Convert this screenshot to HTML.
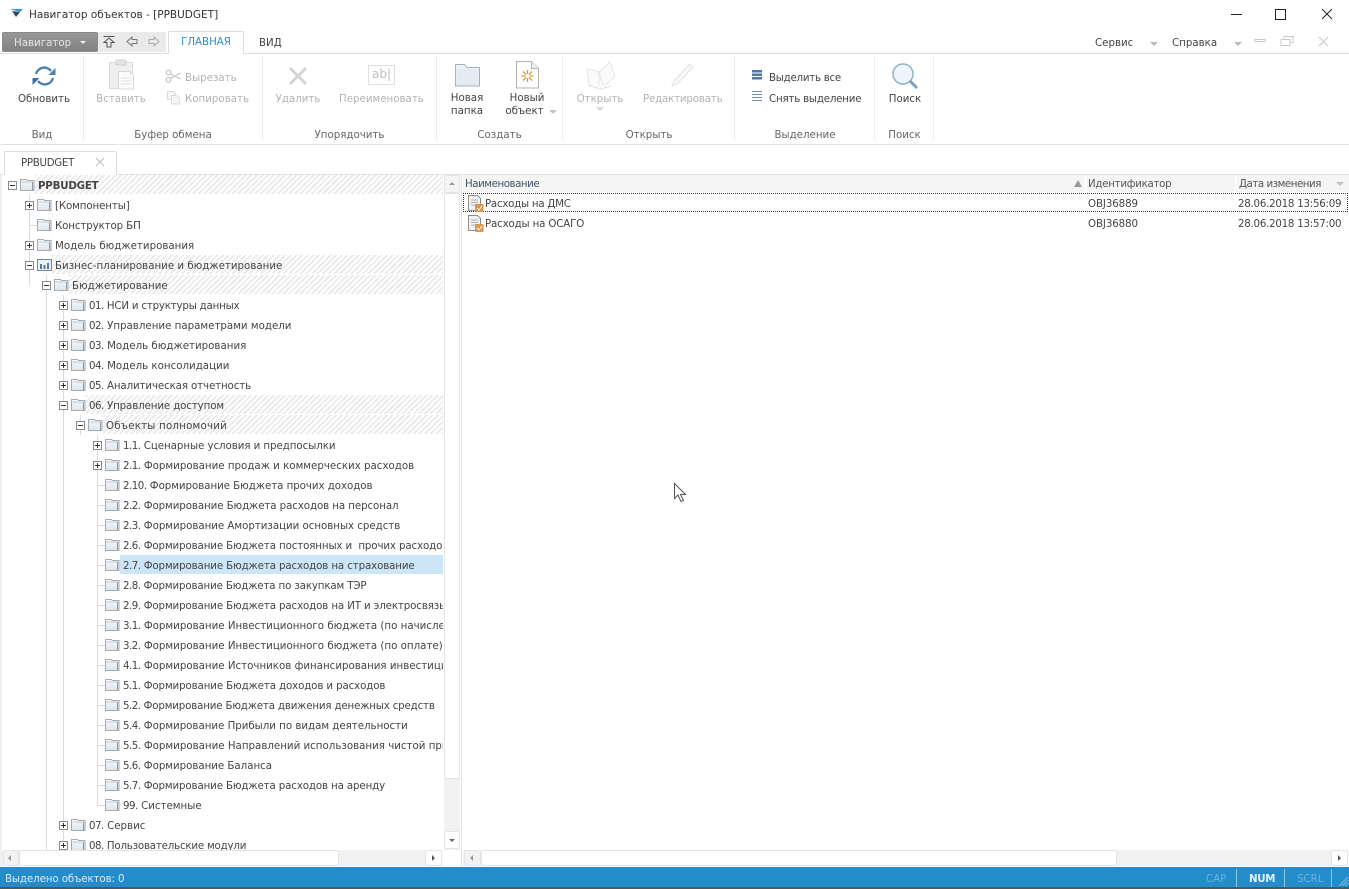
<!DOCTYPE html>
<html lang="ru"><head><meta charset="utf-8"><title>Навигатор объектов</title>
<style>
html,body{margin:0;padding:0;background:#fff}
body{width:1349px;height:889px;position:relative;overflow:hidden;font:10.25px/16px "DejaVu Sans",sans-serif;color:#444}
i{font-style:normal;letter-spacing:-.5px}
.a{position:absolute;white-space:nowrap}
.c{position:absolute;white-space:nowrap;text-align:center}
.g{color:#b3b3b3}
.sep{position:absolute;top:56px;height:84px;width:1px;background:#ececec}
.gl{position:absolute;top:127px;color:#666;text-align:center;white-space:nowrap;height:14px}
.r{position:absolute;left:0;width:443px;height:20px;line-height:20px;white-space:nowrap;color:#444}
.h{position:absolute;right:0;top:0;bottom:1px;background:repeating-linear-gradient(135deg,#ebebeb 0 2px,#fff 2px 4px)}
.s{position:absolute;top:0;right:0;bottom:1px;background:#cde6f7}
.t{position:absolute;top:1px}
.n1{letter-spacing:-.12px}
.n2{letter-spacing:-.2px}
.f{position:absolute;top:3px;width:15px;height:14px}
.e{position:absolute;top:6px;width:7px;height:7px;border:1px solid #8a8a8a;background:#fff;box-sizing:content-box}
.e:before{content:"";position:absolute;left:1px;top:3px;width:5px;height:1px;background:#333}
.p:after{content:"";position:absolute;left:3px;top:1px;width:1px;height:5px;background:#333}
.v{position:absolute;width:1px;background:#dcdcdc}
.l{position:absolute;height:1px;background:#dcdcdc;top:10px}
.btn{position:absolute;background:#fff;border:1px solid #e4e4e4;border-radius:3px;box-sizing:border-box}
.tr{position:absolute;width:0;height:0}
</style></head><body>
<svg width="0" height="0" style="position:absolute"><defs>
<linearGradient id="fg" x1="0" y1="0" x2="0" y2="1"><stop offset="0" stop-color="#f6f8fa"/><stop offset="1" stop-color="#dfe5eb"/></linearGradient>
<g id="fo"><path d="M.5 1.500h6l1 1h6.500v10h-13.500z" fill="url(#fg)" stroke="#a3abb3"/><path d="M1.500 4h11" stroke="#c3cad1"/><path d="M12.500 4v8" stroke="#8f98a1"/></g>
</defs></svg>

<!-- title bar -->
<svg class="a" style="left:9px;top:8px" width="16" height="12"><path d="M1 1l13 0-3 3z" fill="#2f95d6"/><path d="M3 3l8 1-4 5z" fill="#33475c"/></svg>
<div class="a" style="left:29px;top:7px;font-size:10.5px;color:#333">Навигатор объектов - [PPBUDGET]</div>
<svg class="a" style="left:1225px;top:6px" width="120" height="16" fill="none" stroke="#222" stroke-width="1"><path d="M6 8.500h11"/><rect x="50.500" y="3.500" width="10" height="10"/><path d="M97 3l10 10M107 3l-10 10"/></svg>

<!-- top strip -->
<div class="a" style="left:2px;top:32px;width:96px;height:20px;background:linear-gradient(#9a9a9a,#7f7f7f);border-radius:2px;box-shadow:inset 0 0 0 1px #8a8a8a"></div>
<div class="a" style="left:14px;top:35px;color:#e4e4e4">Навигатор</div>
<div class="tr" style="left:80px;top:41px;border:3px solid transparent;border-top:3px solid #eee"></div>
<div class="a" style="left:98px;top:32px;width:68px;height:20px;background:#eaeaea"></div>
<svg class="a" style="left:102px;top:34px" width="62" height="15" fill="none"><path d="M1.500 2.500h11M7 4l5 4.500h-3v4.500h-4v-4.500h-3z" stroke="#555"/><path d="M25 7.500l5-4.500v2.500h5v4h-5v2.500z" stroke="#777"/><path d="M57 7.500l-5-4.500v2.500h-5v4h5v2.500z" stroke="#aaa"/></svg>
<div class="a" style="left:0;top:53px;width:1349px;height:1px;background:#dcdcdc"></div>
<div class="a" style="left:168px;top:31px;width:76px;height:23px;background:#fff;border:1px solid #dcdcdc;border-bottom:0;box-sizing:border-box;border-radius:2px 2px 0 0;text-align:center;line-height:21px;color:#2e8ccb">ГЛАВНАЯ</div>
<div class="a" style="left:259px;top:35px;color:#444">ВИД</div>
<div class="a" style="left:1095px;top:35px">Сервис</div>
<div class="tr" style="left:1150px;top:42px;border:4px solid transparent;border-top:4px solid #b8b8b8"></div>
<div class="a" style="left:1172px;top:35px">Справка</div>
<div class="tr" style="left:1234px;top:42px;border:4px solid transparent;border-top:4px solid #b8b8b8"></div>
<svg class="a" style="left:1254px;top:34px" width="82" height="14" fill="none" stroke="#c8c8c8"><path d="M1 5.500h10v2h-10z"/><path d="M27 5.500h9v6h-9zM30 5v-2.500h9v6h-3"/><path d="M65 3l9 9M74 3l-9 9"/></svg>

<!-- ribbon -->
<svg class="a" style="left:32px;top:64px" width="25" height="24" fill="none" stroke-width="2.400"><path d="M4 10a8.500 8.500 0 0 1 15-3" stroke="#4a7fb2"/><path d="M21 14a8.500 8.500 0 0 1-15 3" stroke="#4a7fb2"/><path d="M22.500 3v7h-7z" fill="#4a7fb2" stroke="none" transform="translate(1 1)"/><path d="M1.500 21v-7h7z" fill="#3f6f9f" stroke="none" transform="translate(-1 0)"/></svg>
<div class="c" style="left:10px;top:91px;width:68px;color:#444">Обновить</div>
<div class="gl" style="left:0;width:84px">Вид</div>
<div class="sep" style="left:83px"></div>

<svg class="a" style="left:108px;top:59px" width="28" height="32" fill="none"><rect x="1.500" y="3.500" width="23" height="26" fill="#efefef" stroke="#dcdcdc"/><rect x="8" y="1" width="10" height="5" fill="#e3e3e3" stroke="#d0d0d0"/><path d="M10.500 12.500h11l4 4v13.500h-15z" fill="#fbfbfb" stroke="#d8d8d8"/><path d="M13 19h10M13 22h10M13 25h10" stroke="#e0e0e0"/></svg>
<div class="c g" style="left:88px;top:91px;width:66px">Вставить</div>
<svg class="a" style="left:165px;top:69px" width="17" height="15" fill="none" stroke="#cfcfcf" stroke-width="1.500"><circle cx="3.500" cy="3.500" r="2.300"/><circle cx="3.500" cy="11" r="2.300"/><path d="M5.500 5l10 5M5.500 9.500l10-5.500"/></svg>
<div class="a g" style="left:185px;top:70px">Вырезать</div>
<svg class="a" style="left:166px;top:90px" width="15" height="15" fill="#f5f5f5" stroke="#dcdcdc"><path d="M1.500 1.500h6l2 2v6h-8z"/><path d="M5.500 5.500h5l3 3v5.500h-8z"/></svg>
<div class="a g" style="left:185px;top:91px">Копировать</div>
<div class="gl" style="left:84px;width:178px">Буфер обмена</div>
<div class="sep" style="left:262px"></div>

<svg class="a" style="left:288px;top:66px" width="20" height="20" fill="none" stroke="#d4d4d4" stroke-width="3"><path d="M2 2l16 16M18 2l-16 16"/></svg>
<div class="c g" style="left:263px;top:91px;width:70px">Удалить</div>
<div class="a" style="left:368px;top:65px;width:27px;height:20px;border:1px solid #e0e0e0;box-sizing:border-box;color:#bdbdbd;font-size:12px;line-height:17px;text-align:center">ab|</div>
<div class="a g" style="left:339px;top:91px">Переименовать</div>
<div class="gl" style="left:263px;width:173px">Упорядочить</div>
<div class="sep" style="left:436px"></div>

<svg class="a" style="left:455px;top:63px" width="25" height="24"><path d="M.5 1.500h9l2.500 3h12.500v18.500h-24z" fill="#eef1f4" stroke="#a6b0ba"/><path d="M1.500 6h22v16h-22z" fill="#e6ebf1"/></svg>
<div class="c" style="left:440px;top:92px;width:54px;line-height:13px;color:#444">Новая<br>папка</div>
<svg class="a" style="left:516px;top:61px" width="24" height="28" fill="none"><path d="M.5.500h15l7 7v19.500h-22z" fill="#fdfdfd" stroke="#b4b4b4"/><path d="M15.500.500v7h7" fill="#eee" stroke="#b4b4b4"/><g stroke="#e8952f" stroke-width="1.300"><path d="M11.500 9v4M11.500 17v4M5.500 15h4M13.500 15h4M7 10.500l3 3M16 10.500l-3 3M7 19.500l3-3M16 19.500l-3-3"/></g></svg>
<div class="c" style="left:497px;top:92px;width:60px;line-height:13px;color:#444">Новый<br><span style="margin-left:-5px">объект</span></div>
<div class="tr" style="left:549px;top:110px;border:4px solid transparent;border-top:4px solid #c4c4c4"></div>
<div class="gl" style="left:437px;width:125px">Создать</div>
<div class="sep" style="left:562px"></div>

<svg class="a" style="left:586px;top:61px" width="30" height="29" fill="#fafafa" stroke="#e4e4e4"><path d="M1 8l12 3v16l-10-3z"/><path d="M13 11l11-10 5 15-12 10z"/><path d="M3 25l12 3 11-3"/></svg>
<div class="c g" style="left:568px;top:91px;width:64px">Открыть</div>
<div class="tr" style="left:596px;top:107px;border:4px solid transparent;border-top:4px solid #d6d6d6"></div>
<svg class="a" style="left:670px;top:62px" width="26" height="26" fill="#f8f8f8" stroke="#e2e2e2"><path d="M20 2l3 3-16 17-5 2 2-5z"/></svg>
<div class="a g" style="left:643px;top:91px;letter-spacing:-.18px">Редактировать</div>
<div class="gl" style="left:563px;width:172px">Открыть</div>
<div class="sep" style="left:734px"></div>

<svg class="a" style="left:752px;top:70px" width="12" height="36" fill="none"><g fill="#4d78a8"><rect x="0" y="0" width="10" height="2.500"/><rect x="0" y="3.500" width="10" height="2.500"/><rect x="0" y="7" width="10" height="2.500"/></g><g stroke="#6b8db3"><path d="M0 21.500h10M0 24.500h10M0 27.500h10M0 30.500h10" stroke-width="1"/></g></svg>
<div class="a" style="left:769px;top:70px;color:#444;letter-spacing:-.25px">Выделить все</div>
<div class="a" style="left:769px;top:91px;color:#444;letter-spacing:-.2px">Снять выделение</div>
<div class="gl" style="left:735px;width:140px">Выделение</div>
<div class="sep" style="left:874px"></div>

<svg class="a" style="left:892px;top:63px" width="28" height="27" fill="none"><circle cx="11" cy="11" r="10" fill="#eef5fb" stroke="#8fb3cf" stroke-width="1.500"/><path d="M18 18l7 7" stroke="#7f9fba" stroke-width="3"/></svg>
<div class="c" style="left:875px;top:91px;width:60px;color:#444">Поиск</div>
<div class="gl" style="left:875px;width:59px">Поиск</div>
<div class="sep" style="left:933px"></div>
<div class="a" style="left:0;top:144px;width:1349px;height:1px;background:#e2e2e2"></div>

<!-- doc tab -->
<div class="a" style="left:4px;top:151px;width:113px;height:24px;border:1px solid #dedede;border-bottom:0;box-sizing:border-box;background:#fff;border-radius:2px 2px 0 0"></div>
<div class="a" style="left:21px;top:155px;color:#444;letter-spacing:-.3px">PPBUDGET</div>
<svg class="a" style="left:95px;top:157px" width="10" height="10" stroke="#bbb" fill="none"><path d="M1 1l8 8M9 1l-8 8"/></svg>
<div class="a" style="left:0;top:174px;width:1349px;height:1px;background:#e2e2e2"></div>
<div class="a" style="left:5px;top:174px;width:111px;height:1px;background:#fff"></div>
<div class="a" style="left:0;top:175px;width:2px;height:692px;background:#efefef"></div>

<!-- tree -->
<div class="a" style="left:2px;top:175px;width:441px;height:675px;overflow:hidden">
<div style="position:absolute;left:-2px;top:0;width:443px;height:675px">
<div class="v" style="left:29px;top:20px;height:90px"></div>
<div class="v" style="left:46px;top:100px;height:575px"></div>
<div class="v" style="left:63px;top:120px;height:555px"></div>
<div class="v" style="left:80px;top:240px;height:20px"></div>
<div class="v" style="left:97px;top:260px;height:371px"></div>

<div class="r" style="top:0"><div class="h" style="left:35px"></div><div class="e" style="left:8px"></div><svg class="f" style="left:20px"><use href="#fo"/></svg><div class="t" style="left:38px;font-weight:bold;color:#444;letter-spacing:-.2px">PPBUDGET</div></div>
<div class="r" style="top:20px"><div class="e p" style="left:25px"></div><svg class="f" style="left:37px"><use href="#fo"/></svg><div class="t n1" style="left:55px">[Компоненты]</div></div>
<div class="r" style="top:40px"><div class="l" style="left:29px;width:8px"></div><svg class="f" style="left:37px"><use href="#fo"/></svg><div class="t n1" style="left:55px">Конструктор БП</div></div>
<div class="r" style="top:60px"><div class="e p" style="left:25px"></div><svg class="f" style="left:37px"><use href="#fo"/></svg><div class="t" style="left:55px">Модель бюджетирования</div></div>
<div class="r" style="top:80px"><div class="h" style="left:52px"></div><div class="e" style="left:25px"></div><svg class="f" style="left:37px" viewBox="0 0 15 14"><rect x=".5" y="1.500" width="14" height="11" fill="#eef2f7" stroke="#6f86a3"/><path d="M3 6h2v5h-2zM6.500 7h2v4h-2zM10 5h2v6h-2z" fill="#4d78a8"/></svg><div class="t" style="left:55px">Бизнес-планирование и бюджетирование</div></div>
<div class="r" style="top:100px"><div class="h" style="left:69px"></div><div class="e" style="left:42px"></div><svg class="f" style="left:54px"><use href="#fo"/></svg><div class="t" style="left:72px">Бюджетирование</div></div>
<div class="r" style="top:120px"><div class="e p" style="left:59px"></div><svg class="f" style="left:71px"><use href="#fo"/></svg><div class="t n2" style="left:89px"><i>01.</i> НСИ и структуры данных</div></div>
<div class="r" style="top:140px"><div class="e p" style="left:59px"></div><svg class="f" style="left:71px"><use href="#fo"/></svg><div class="t" style="left:89px"><i>02.</i> Управление параметрами модели</div></div>
<div class="r" style="top:160px"><div class="e p" style="left:59px"></div><svg class="f" style="left:71px"><use href="#fo"/></svg><div class="t" style="left:89px"><i>03.</i> Модель бюджетирования</div></div>
<div class="r" style="top:180px"><div class="e p" style="left:59px"></div><svg class="f" style="left:71px"><use href="#fo"/></svg><div class="t" style="left:89px"><i>04.</i> Модель консолидации</div></div>
<div class="r" style="top:200px"><div class="e p" style="left:59px"></div><svg class="f" style="left:71px"><use href="#fo"/></svg><div class="t n1" style="left:89px"><i>05.</i> Аналитическая отчетность</div></div>
<div class="r" style="top:220px"><div class="h" style="left:86px"></div><div class="e" style="left:59px"></div><svg class="f" style="left:71px"><use href="#fo"/></svg><div class="t n1" style="left:89px"><i>06.</i> Управление доступом</div></div>
<div class="r" style="top:240px"><div class="h" style="left:103px"></div><div class="e" style="left:76px"></div><svg class="f" style="left:88px"><use href="#fo"/></svg><div class="t" style="left:106px;letter-spacing:.2px">Объекты полномочий</div></div>
<div class="r" style="top:260px"><div class="e p" style="left:93px"></div><svg class="f" style="left:105px"><use href="#fo"/></svg><div class="t" style="left:123px;letter-spacing:-.06px"><i>1.1.</i> Сценарные условия и предпосылки</div></div>
<div class="r" style="top:280px"><div class="e p" style="left:93px"></div><svg class="f" style="left:105px"><use href="#fo"/></svg><div class="t" style="left:123px"><i>2.1.</i> Формирование продаж и коммерческих расходов</div></div>
<div class="r" style="top:300px"><div class="l" style="left:97px;width:8px"></div><svg class="f" style="left:105px"><use href="#fo"/></svg><div class="t" style="left:123px;letter-spacing:-.05px"><i>2.10.</i> Формирование Бюджета прочих доходов</div></div>
<div class="r" style="top:320px"><div class="l" style="left:97px;width:8px"></div><svg class="f" style="left:105px"><use href="#fo"/></svg><div class="t" style="left:123px;letter-spacing:-.09px"><i>2.2.</i> Формирование Бюджета расходов на персонал</div></div>
<div class="r" style="top:340px"><div class="l" style="left:97px;width:8px"></div><svg class="f" style="left:105px"><use href="#fo"/></svg><div class="t" style="left:123px;letter-spacing:-.03px"><i>2.3.</i> Формирование Амортизации основных средств</div></div>
<div class="r" style="top:360px"><div class="l" style="left:97px;width:8px"></div><svg class="f" style="left:105px"><use href="#fo"/></svg><div class="t n1" style="left:123px"><i>2.6.</i> Формирование Бюджета постоянных и&nbsp; прочих расходов</div></div>
<div class="r" style="top:380px"><div class="s" style="left:120px"></div><div class="l" style="left:97px;width:8px"></div><svg class="f" style="left:105px"><use href="#fo"/></svg><div class="t n1" style="left:123px"><i>2.7.</i> Формирование Бюджета расходов на страхование</div></div>
<div class="r" style="top:400px"><div class="l" style="left:97px;width:8px"></div><svg class="f" style="left:105px"><use href="#fo"/></svg><div class="t" style="left:123px;letter-spacing:-.14px"><i>2.8.</i> Формирование Бюджета по закупкам ТЭР</div></div>
<div class="r" style="top:420px"><div class="l" style="left:97px;width:8px"></div><svg class="f" style="left:105px"><use href="#fo"/></svg><div class="t n1" style="left:123px"><i>2.9.</i> Формирование Бюджета расходов на ИТ и электросвязь</div></div>
<div class="r" style="top:440px"><div class="l" style="left:97px;width:8px"></div><svg class="f" style="left:105px"><use href="#fo"/></svg><div class="t" style="left:123px"><i>3.1.</i> Формирование Инвестиционного бюджета (по начислению)</div></div>
<div class="r" style="top:460px"><div class="l" style="left:97px;width:8px"></div><svg class="f" style="left:105px"><use href="#fo"/></svg><div class="t" style="left:123px"><i>3.2.</i> Формирование Инвестиционного бюджета (по оплате)</div></div>
<div class="r" style="top:480px"><div class="l" style="left:97px;width:8px"></div><svg class="f" style="left:105px"><use href="#fo"/></svg><div class="t" style="left:123px"><i>4.1.</i> Формирование Источников финансирования инвестиций</div></div>
<div class="r" style="top:500px"><div class="l" style="left:97px;width:8px"></div><svg class="f" style="left:105px"><use href="#fo"/></svg><div class="t n1" style="left:123px"><i>5.1.</i> Формирование Бюджета доходов и расходов</div></div>
<div class="r" style="top:520px"><div class="l" style="left:97px;width:8px"></div><svg class="f" style="left:105px"><use href="#fo"/></svg><div class="t" style="left:123px;letter-spacing:-.17px"><i>5.2.</i> Формирование Бюджета движения денежных средств</div></div>
<div class="r" style="top:540px"><div class="l" style="left:97px;width:8px"></div><svg class="f" style="left:105px"><use href="#fo"/></svg><div class="t" style="left:123px;letter-spacing:-.02px"><i>5.4.</i> Формирование Прибыли по видам деятельности</div></div>
<div class="r" style="top:560px"><div class="l" style="left:97px;width:8px"></div><svg class="f" style="left:105px"><use href="#fo"/></svg><div class="t" style="left:123px"><i>5.5.</i> Формирование Направлений использования чистой прибыли</div></div>
<div class="r" style="top:580px"><div class="l" style="left:97px;width:8px"></div><svg class="f" style="left:105px"><use href="#fo"/></svg><div class="t" style="left:123px;letter-spacing:-.03px"><i>5.6.</i> Формирование Баланса</div></div>
<div class="r" style="top:600px"><div class="l" style="left:97px;width:8px"></div><svg class="f" style="left:105px"><use href="#fo"/></svg><div class="t" style="left:123px;letter-spacing:-.13px"><i>5.7.</i> Формирование Бюджета расходов на аренду</div></div>
<div class="r" style="top:620px"><div class="l" style="left:97px;width:8px"></div><svg class="f" style="left:105px"><use href="#fo"/></svg><div class="t" style="left:123px"><i>99.</i> Системные</div></div>
<div class="r" style="top:640px"><div class="e p" style="left:59px"></div><svg class="f" style="left:71px"><use href="#fo"/></svg><div class="t" style="left:89px"><i>07.</i> Сервис</div></div>
<div class="r" style="top:660px"><div class="e p" style="left:59px"></div><svg class="f" style="left:71px"><use href="#fo"/></svg><div class="t n2" style="left:89px"><i>08.</i> Пользовательские модули</div></div>
</div></div>

<!-- tree scrollbars -->
<div class="a" style="left:444px;top:175px;width:16px;height:675px;background:#f1f1f1"></div>
<div class="btn" style="left:444px;top:175px;width:16px;height:18px;background:#f4f4f4"></div>
<div class="tr" style="left:449px;top:182px;border:3px solid transparent;border-bottom:3px solid #999;border-top:0"></div>
<div class="btn" style="left:444px;top:193px;width:16px;height:586px"></div>
<div class="btn" style="left:444px;top:831px;width:16px;height:18px"></div>
<div class="tr" style="left:449px;top:839px;border:3px solid transparent;border-top:3px solid #666;border-bottom:0"></div>
<div class="a" style="left:461px;top:175px;width:1px;height:692px;background:#e2e2e2"></div>
<div class="a" style="left:2px;top:850px;width:440px;height:16px;background:#f1f1f1"></div>
<div class="btn" style="left:3px;top:850px;width:16px;height:16px;background:#f2f2f2"></div>
<div class="tr" style="left:8px;top:855px;border:3px solid transparent;border-right:3px solid #999;border-left:0"></div>
<div class="btn" style="left:19px;top:850px;width:320px;height:16px"></div>
<div class="btn" style="left:425px;top:850px;width:17px;height:16px"></div>
<div class="tr" style="left:432px;top:855px;border:3px solid transparent;border-left:3px solid #555;border-right:0"></div>

<!-- list -->
<div class="a" style="left:463px;top:175px;width:886px;height:17px;background:#f5f5f5"></div>
<div class="a" style="left:465px;top:176px;color:#44546a;letter-spacing:-.45px">Наименование</div>
<div class="tr" style="left:1074px;top:180px;border:4px solid transparent;border-bottom:7px solid #999;border-top:0"></div>
<div class="a" style="left:1085px;top:175px;width:1px;height:17px;background:#fff"></div>
<div class="a" style="left:1088px;top:176px;color:#555;letter-spacing:-.28px">Идентификатор</div>
<div class="a" style="left:1235px;top:175px;width:1px;height:17px;background:#fff"></div>
<div class="a" style="left:1239px;top:176px;color:#555;letter-spacing:-.47px">Дата изменения</div>
<div class="tr" style="left:1336px;top:182px;border:4px solid transparent;border-top:4px solid #c0c0c0"></div>
<div class="a" style="left:463px;top:193px;width:885px;height:19px;border:1px dotted #333;box-sizing:border-box"></div>
<svg class="a" style="left:468px;top:195px" width="16" height="17"><path d="M.5.500h9l3 3v12h-12z" fill="#f2f2f2" stroke="#8b8b8b"/><path d="M3 5h7M3 7.500h7M3 10h5" stroke="#b0b0b0"/><rect x="7" y="9" width="8.500" height="8" rx="1" fill="#d9964c"/><path d="M9 13l2 2 3-4" stroke="#fff" fill="none"/></svg>
<div class="a" style="left:485px;top:196px;letter-spacing:-.25px">Расходы на ДМС</div>
<div class="a" style="left:1088px;top:196px;letter-spacing:-.1px">OBJ36889</div>
<div class="a" style="left:1238px;top:196px;letter-spacing:-.25px">28.06.2018 13:56:09</div>
<svg class="a" style="left:468px;top:215px" width="16" height="17"><path d="M.5.500h9l3 3v12h-12z" fill="#f2f2f2" stroke="#8b8b8b"/><path d="M3 5h7M3 7.500h7M3 10h5" stroke="#b0b0b0"/><rect x="7" y="9" width="8.500" height="8" rx="1" fill="#d9964c"/><path d="M9 13l2 2 3-4" stroke="#fff" fill="none"/></svg>
<div class="a" style="left:485px;top:216px;letter-spacing:-.16px">Расходы на ОСАГО</div>
<div class="a" style="left:1088px;top:216px;letter-spacing:-.1px">OBJ36880</div>
<div class="a" style="left:1238px;top:216px;letter-spacing:-.25px">28.06.2018 13:57:00</div>

<!-- cursor -->
<svg class="a" style="left:672px;top:482px" width="16" height="22" fill="#fff" stroke="#555"><path d="M2.500 1.500v15l3.500-3.500 3 6.500 2.500-1-3-6h5z"/></svg>

<!-- list hscroll -->
<div class="a" style="left:463px;top:850px;width:885px;height:16px;background:#f1f1f1"></div>
<div class="btn" style="left:464px;top:850px;width:17px;height:16px;background:#f2f2f2"></div>
<div class="tr" style="left:470px;top:855px;border:3px solid transparent;border-right:3px solid #999;border-left:0"></div>
<div class="btn" style="left:481px;top:850px;width:636px;height:16px"></div>
<div class="btn" style="left:1331px;top:850px;width:17px;height:16px"></div>
<div class="tr" style="left:1338px;top:855px;border:3px solid transparent;border-left:3px solid #555;border-right:0"></div>

<!-- status -->
<div class="a" style="left:0;top:867px;width:1349px;height:20px;background:#258ccb"></div>
<div class="a" style="left:0;top:887px;width:1349px;height:2px;background:#555"></div>
<div class="a" style="left:5px;top:871px;color:#d8ecf8;letter-spacing:-.1px">Выделено объектов: 0</div>
<div class="a" style="left:1206px;top:871px;color:#6cb2de">CAP</div>
<div class="a" style="left:1236px;top:869px;width:1px;height:18px;background:#8cc4e6"></div>
<div class="a" style="left:1249px;top:871px;color:#e6f3fb;font-weight:bold;letter-spacing:-.3px">NUM</div>
<div class="a" style="left:1284px;top:869px;width:1px;height:18px;background:#8cc4e6"></div>
<div class="a" style="left:1297px;top:871px;color:#6cb2de">SCRL</div>
<div class="a" style="left:1331px;top:869px;width:1px;height:18px;background:#8cc4e6"></div>
<svg class="a" style="left:1338px;top:876px" width="11" height="11" stroke="#7db9df" fill="none"><path d="M10 1l-9 9M10 4l-6 6M10 7l-3 3"/></svg>
</body></html>
